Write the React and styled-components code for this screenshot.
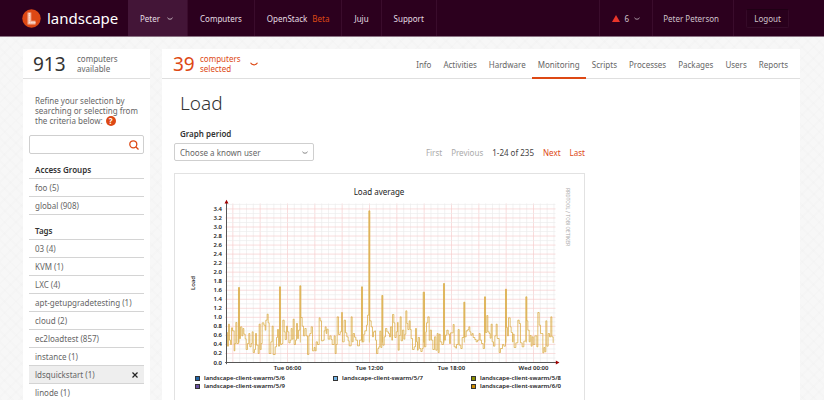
import React from "react";
import styled, { createGlobalStyle, css } from "styled-components";

const orange = "#dd4814";
const sans = `"Noto Sans", "Open Sans", sans-serif`;

const GlobalStyle = createGlobalStyle`
  * { box-sizing: border-box; }
  body {
    margin: 0;
    font: 400 8px/11px ${sans};
    color: #666;
    background-color: #f7f7f7;
    background-image:
      repeating-linear-gradient(45deg, rgba(0,0,0,.006) 0 2px, transparent 2px 8px),
      repeating-linear-gradient(-45deg, rgba(0,0,0,.006) 0 2px, transparent 2px 8px);
  }
  a { color: inherit; text-decoration: none; }
  button, input, select { font: inherit; color: inherit; }
  h1, h2, p, ul { margin: 0; padding: 0; list-style: none; }
`;

const Page = styled.div`
  height: 100vh;
  display: flex;
  flex-direction: column;
  overflow: hidden;
`;

const TopBar = styled.header`
  display: flex;
  align-items: stretch;
  flex: none;
  height: 37px;
  padding: 0 35px 0 22px;
  background: #2c001e;
  border-bottom: 1px solid #8b7384;
  color: #e4dde2;
`;

const Brand = styled.a`
  display: flex;
  align-items: center;
  gap: 6px;
  width: 106px;
  font: 400 15px/20px ${sans};
  color: #fff;
`;

const TopNav = styled.nav`
  display: flex;
  flex: 1;
`;

const navCell = css`
  display: flex;
  align-items: center;
  gap: 5px;
  padding: 0 12px;
  border: 0;
  border-right: 1px solid #3a0c2c;
  background: ${(p) => (p.$active ? "#431537" : "transparent")};
  white-space: nowrap;
`;
const NavLink = styled.a`${navCell}`;
const NavButton = styled.button`
  ${navCell}
  gap: ${(p) => (p.$active ? 7 : 5)}px;
  padding-right: ${(p) => (p.$active ? 14 : 12)}px;
`;
const Beta = styled.span`color: ${orange};`;

const Account = styled.div`
  display: flex;
  border-left: 1px solid #3a0c2c;
  color: #cfc3cb;
`;
const UserLink = styled.a`
  ${navCell}
  padding: 0 14px 0 10px;
`;
const Logout = styled.button`
  align-self: center;
  height: 19px;
  margin: 0 0 0 12px;
  padding: 0 7px;
  border: 1px solid #350a28;
  border-top-color: #1f0015;
  border-radius: 2px;
  background: #29001c;
  min-width: 43px;
`;

const Body = styled.div`
  display: flex;
  flex: 1;
  gap: 12px;
  min-height: 0;
  padding: 12px 24px 0 23px;
`;

const Sidebar = styled.aside`
  flex: none;
  width: 127px;
  background: #fff;
`;
const Main = styled.main`
  flex: 1;
  display: flex;
  flex-direction: column;
  background: #fff;
`;
const PanelHead = styled.div`
  display: flex;
  align-items: center;
  flex: none;
  height: 30px;
  padding: 0 ${(p) => (p.$main ? 6 : 10)}px;
  border-bottom: 1px solid #dfdfdf;
`;
const Count = styled.strong`
  width: ${(p) => (p.$selected ? 27 : 44)}px;
  font: 400 19px/24px ${sans};
  color: ${(p) => (p.$selected ? orange : "#333")};
`;
const CountLabel = styled.span`
  width: 43px;
  line-height: 10px;
`;
const Selected = styled.button`
  display: flex;
  align-items: center;
  padding: 0 0 0 5px;
  border: 0;
  background: none;
  color: ${orange};
  text-align: left;
  > svg { margin-left: 7px; }
`;

const Filters = styled.div`
  padding: 17px 6px 0;
`;
const Hint = styled.p`
  padding-left: 6px;
  line-height: 10px;
  white-space: nowrap;
`;
const HintLine = styled.span`
  display: flex;
  align-items: center;
  gap: 3px;
`;
const Help = styled.button`
  width: 10px;
  height: 10px;
  padding: 0;
  border: 0;
  border-radius: 50%;
  background: ${orange};
  color: #fff;
  font-weight: 700;
  line-height: 10px;
`;
const SearchBox = styled.label`
  display: flex;
  align-items: center;
  height: 19px;
  margin: 9px 0 10px;
  padding: 0 4px;
  border: 1px solid #cfcfcf;
  border-radius: 2px;
`;
const SearchInput = styled.input`
  flex: 1;
  min-width: 0;
  border: 0;
  outline: 0;
  padding: 0;
  background: none;
`;
const Group = styled.section`
  margin-bottom: 10px;
`;
const GroupTitle = styled.h2`
  height: 15px;
  padding-left: 6px;
  font: 600 8px/11px ${sans};
  color: #333;
  border-bottom: 1px solid #d4d4d4;
`;
const GroupItem = styled.li`
  display: flex;
  justify-content: space-between;
  align-items: center;
  height: 18px;
  padding: 0 6px;
  border-bottom: 1px solid #d4d4d4;
  background: ${(p) => (p.$active ? "#eeeeee" : "transparent")};
`;
const Clear = styled.button`
  display: flex;
  padding: 0;
  border: 0;
  background: none;
  color: #222;
`;

const Tabs = styled.nav`
  display: flex;
  align-self: stretch;
  margin: 0 0 -1px auto;
`;
const Tab = styled.a`
  display: flex;
  align-items: center;
  padding: 2px 6px 0;
  border-bottom: 2px solid ${(p) => (p.$active ? orange : "transparent")};
`;

const Content = styled.div`
  flex: 1;
  display: flex;
  flex-direction: column;
  width: 100%;
  max-width: 435px;
  min-height: 0;
  padding: 12px 12px 0;
`;
const Title = styled.h1`
  padding-left: 6px;
  font: 300 19px/24px ${sans};
  color: #333;
`;
const Label = styled.label`
  display: block;
  margin: 13px 0 4px 6px;
  font-weight: 600;
  color: #333;
`;
const Controls = styled.div`
  display: flex;
  align-items: center;
  justify-content: space-between;
  margin-bottom: 12px;
`;
const SelectWrap = styled.div`
  display: grid;
  align-items: center;
  width: 140px;
  > * { grid-area: 1 / 1; }
  > svg { justify-self: end; margin-right: 6px; pointer-events: none; }
`;
const Select = styled.select`
  appearance: none;
  height: 18px;
  padding: 0 5px;
  border: 1px solid #cfcfcf;
  border-radius: 2px;
  background: #fff;
`;
const Pager = styled.nav`
  display: flex;
  gap: 9px;
  color: ${orange};
`;
const PageOff = styled.span`color: #aaa;`;
const PageInfo = styled.span`color: #444;`;

const Figure = styled.figure`
  flex: 1;
  margin: 0;
  border: 1px solid #e2e2e2;
  border-bottom: 0;
`;
const ChartSvg = styled.svg`
  display: block;
  width: 100%;
`;
const Legend = styled.ul`
  display: grid;
  grid-template-columns: repeat(3, 1fr);
  padding: 0 0 0 20px;
  margin-right: -25px;
`;
const LegendItem = styled.li`
  grid-column: ${(p) => p.$column};
  display: flex;
  align-items: center;
  gap: 4px;
  height: 8px;
  font: 600 6px/8px ${sans};
  color: #222;
  white-space: nowrap;
`;
const Swatch = styled.span`
  width: 5px;
  height: 5px;
  border: 1px solid #333;
  background: ${(p) => p.$color};
`;

const Chevron = ({ size = 6 }) => (
  <svg width={size} height={size / 2} viewBox="0 0 8 4" fill="none" stroke="currentColor" strokeWidth="1.1" aria-hidden="true">
    <path d="M.5 .8C2 3.6 6 3.6 7.5 .8" />
  </svg>
);

const Logo = () => (
  <svg width="19" height="19" viewBox="0 0 19 19" aria-hidden="true">
    <circle cx="9.5" cy="9.5" r="9.2" fill="#dd4814" />
    <path d="M5.5 3.5h3.8v8.2h4.2v3.8h-8z" fill="#f3b39b" />
    <path d="M7.4 4v9.6h6" fill="none" stroke="#fbe3da" strokeWidth="1.2" strokeDasharray="1.2 .6" />
  </svg>
);

// Step samples: horizontal position and height above the baseline, in thirds of a pixel.
const samples = [
  0,90, 3,49, 6,115, 9,67, 12,54, 15,104, 18,95, 23,35, 25,57, 28,120, 31,57, 36,225, 39,72, 42,107, 46,80, 49,102,
  52,85, 56,71, 59,39, 63,57, 67,87, 70,47, 74,57, 77,92, 80,30, 84,39, 87,87, 90,52, 95,27, 98,115, 101,39, 104,57,
  107,119, 112,112, 116,97, 118,127, 122,145, 125,119, 128,27, 133,62, 137,109, 140,24, 146,47, 150,75, 153,99,
  156,49, 159,227, 162,54, 166,57, 169,127, 173,92, 176,69, 180,109, 183,92, 187,59, 191,67, 194,102, 197,70,
  200,130, 203,54, 207,67, 210,117, 213,72, 216,97, 220,230, 223,135, 227,109, 231,80, 235,102, 239,80, 243,24,
  247,80, 250,87, 254,107, 258,35, 263,45, 266,35, 269,62, 273,54, 278,134, 281,125, 285,65, 290,67, 293,95, 296,107,
  299,87, 301,100, 305,70, 310,80, 314,69, 317,54, 323,80, 326,27, 329,54, 332,137, 336,84, 341,92, 345,150, 348,62,
  353,127, 357,89, 361,77, 365,65, 368,50, 374,137, 377,62, 380,87, 384,76, 388,67, 393,50, 399,67, 405,227, 408,62,
  412,85, 415,95, 420,112, 423,142, 427,455, 430,125, 434,107, 438,77, 441,92, 445,95, 447,67, 450,27, 454,42, 457,47,
  460,94, 463,45, 466,201, 469,52, 473,77, 477,102, 481,92, 486,87, 489,77, 492,107, 496,67, 498,144, 502,119, 505,75,
  509,92, 513,120, 515,37, 518,81, 521,137, 524,65, 528,97, 532,70, 535,85, 538,155, 541,117, 544,99, 548,125, 551,99,
  554,72, 558,39, 563,47, 567,102, 570,62, 573,37, 575,75, 579,42, 583,33, 587,42, 590,211, 594,47, 598,92, 600,119,
  604,137, 608,67, 611,97, 615,67, 619,39, 624,77, 628,37, 632,87, 635,30, 638,85, 641,62, 646,54, 651,237, 654,67,
  657,82, 661,97, 665,85, 669,57, 672,89, 677,89, 680,114, 683,47, 688,43, 690,54, 695,99, 698,52, 703,42, 707,75,
  712,181, 715,77, 719,95, 724,99, 727,107, 730,92, 733,82, 737,87, 740,75, 745,69, 749,62, 753,67, 758,87, 761,67,
  765,57, 770,42, 774,197, 777,90, 781,141, 784,92, 788,87, 791,73, 794,115, 797,62, 801,49, 805,80, 809,115, 812,72,
  818,30, 822,42, 828,54, 832,49, 837,220, 840,105, 843,80, 846,134, 851,107, 854,90, 858,62, 860,85, 863,45, 868,59,
  874,127, 878,117, 882,59, 887,47, 892,64, 898,197, 901,125, 904,97, 908,62, 911,81, 914,49, 917,77, 920,54, 925,80,
  931,47, 934,150, 938,112, 942,87, 946,87, 949,29, 952,45, 955,32, 958,125, 961,49, 965,87, 969,77, 973,137, 976,77,
  980,59,
];

let linePath = `M0 ${-samples[1]}`;
let spikes = "";
for (let i = 2; i < samples.length; i += 2) {
  linePath += `H${samples[i]}V${-samples[i + 1]}`;
  const next = samples[i + 2];
  if (samples[i + 1] > 180) spikes += `M${samples[i]} -60V${-samples[i + 1]}H${next}V-60z`;
}

const yTicks = Array.from({ length: 18 }, (_, i) => i);
const xLines = Array.from({ length: 48 }, (_, i) => i);
const times = [
  ["Tue 06:00", 183],
  ["Tue 12:00", 429],
  ["Tue 18:00", 675],
  ["Wed 00:00", 921],
];

const Chart = () => (
  <ChartSvg viewBox="0 0 409 200" role="img" aria-label="Load average" fontFamily={sans} fill="#222">
    <text x="204" y="21" fontSize="8" textAnchor="middle">Load average</text>
    <g transform="translate(51.5 188.5) scale(.33333)">
      {xLines.map((i) => (
        <path key={i} d={`M${19 + i * 20.5} 0V-477`} stroke={i % 4 ? "#ececec" : "#f6cccc"} strokeWidth="2" />
      ))}
      {yTicks.map((i) => (
        <g key={i} strokeWidth="2">
          <path d={`M0 ${-i * 27.1 - 13.5}H987`} stroke="#ececec" />
          <path d={`M-4 ${-i * 27.1}H987`} stroke="#f6cccc" />
        </g>
      ))}
      <path d={spikes} fill="#e3c27a" />
      <path d={linePath} fill="none" stroke="#d8a83e" strokeWidth="2.2" />
      <path d="M0 5V-480M-4 0H992" stroke="#555" strokeWidth="3" />
      <path d="M-6 -477L0 -488L6 -477zM988 -6L999 0L988 6z" fill="#a00000" />
    </g>
    <g fontSize="6" fontWeight="600">
      {yTicks.map((i) => (
        <text key={i} x="47" y={190.5 - i * 9.03} textAnchor="end">{(i / 5).toFixed(1)}</text>
      ))}
      {times.map(([label, x]) => (
        <text key={label} x={51.5 + x / 3} y="196" textAnchor="middle">{label}</text>
      ))}
    </g>
    <text transform="translate(20 109) rotate(-90)" fontSize="6" fontWeight="500" textAnchor="middle">Load</text>
    <text transform="translate(391 14) rotate(90)" fontFamily="Roboto, sans-serif" fontSize="5" fill="#aaa">RRDTOOL / TOBI OETIKER</text>
  </ChartSvg>
);

const legend = [
  ["5/6", "#1f66a8", 1],
  ["5/7", "#73b5e8", 2],
  ["5/8", "#8a8f00", 3],
  ["5/9", "#6a51a3", 1],
  ["6/0", "#cc8a00", 3],
];

const groups = [
  { title: "Access Groups", items: ["foo (5)", "global (908)"] },
  {
    title: "Tags",
    items: ["03 (4)", "KVM (1)", "LXC (4)", "apt-getupgradetesting (1)", "cloud (2)", "ec2loadtest (857)", "instance (1)", "ldsquickstart (1)", "linode (1)"],
  },
];

const tabs = ["Info", "Activities", "Hardware", "Monitoring", "Scripts", "Processes", "Packages", "Users", "Reports"];

export default function App() {
  return (
    <Page>
      <GlobalStyle />
      <TopBar>
        <Brand href="#"><Logo />landscape</Brand>
        <TopNav>
          <NavButton $active>Peter <Chevron /></NavButton>
          <NavLink href="#">Computers</NavLink>
          <NavLink href="#">OpenStack <Beta>Beta</Beta></NavLink>
          <NavLink href="#">Juju</NavLink>
          <NavLink href="#">Support</NavLink>
        </TopNav>
        <Account>
          <NavButton aria-label="6 alerts">
            <svg width="8" height="7" viewBox="0 0 8 7" aria-hidden="true"><path d="M4 0l4 7H0z" fill="#e8352a" /></svg>
            6 <Chevron />
          </NavButton>
          <UserLink href="#">Peter Peterson</UserLink>
          <Logout>Logout</Logout>
        </Account>
      </TopBar>
      <Body>
        <Sidebar>
          <PanelHead>
            <Count>913</Count>
            <CountLabel>computers available</CountLabel>
          </PanelHead>
          <Filters>
            <Hint>
              Refine your selection by<br />searching or selecting from
              <HintLine>the criteria below: <Help aria-label="Help">?</Help></HintLine>
            </Hint>
            <SearchBox>
              <SearchInput type="search" aria-label="Search computers" />
              <svg width="10" height="10" viewBox="0 0 10 10" fill="none" stroke={orange} strokeWidth="1.3" aria-hidden="true">
                <circle cx="4.3" cy="4.3" r="3.5" /><path d="M6.8 6.8L9.5 9.5" />
              </svg>
            </SearchBox>
            {groups.map((group) => (
              <Group key={group.title}>
                <GroupTitle>{group.title}</GroupTitle>
                <ul>
                  {group.items.map((item) => {
                    const active = item.startsWith("ldsquickstart");
                    return (
                      <GroupItem key={item} $active={active}>
                        <a href="#">{item}</a>
                        {active && (
                          <Clear aria-label="Remove ldsquickstart">
                            <svg width="6" height="6" viewBox="0 0 6 6" stroke="currentColor" strokeWidth="1.2" aria-hidden="true"><path d="M.5 .5l5 5M5.5 .5l-5 5" /></svg>
                          </Clear>
                        )}
                      </GroupItem>
                    );
                  })}
                </ul>
              </Group>
            ))}
          </Filters>
        </Sidebar>
        <Main>
          <PanelHead $main>
            <Selected>
              <Count $selected>39</Count>
              <CountLabel>computers selected</CountLabel>
              <Chevron size={8} />
            </Selected>
            <Tabs>
              {tabs.map((tab) => (
                <Tab key={tab} href="#" $active={tab === "Monitoring"}>{tab}</Tab>
              ))}
            </Tabs>
          </PanelHead>
          <Content>
            <Title>Load</Title>
            <Label htmlFor="period">Graph period</Label>
            <Controls>
              <SelectWrap>
                <Select id="period"><option>Choose a known user</option></Select>
                <Chevron />
              </SelectWrap>
              <Pager aria-label="Pages">
                <PageOff>First</PageOff>
                <PageOff>Previous</PageOff>
                <PageInfo>1-24 of 235</PageInfo>
                <a href="#">Next</a>
                <a href="#">Last</a>
              </Pager>
            </Controls>
            <Figure>
              <Chart />
              <Legend>
                {legend.map(([name, color, column]) => (
                  <LegendItem key={name} $column={column}><Swatch $color={color} />landscape-client-swarm/{name}</LegendItem>
                ))}
              </Legend>
            </Figure>
          </Content>
        </Main>
      </Body>
    </Page>
  );
}
